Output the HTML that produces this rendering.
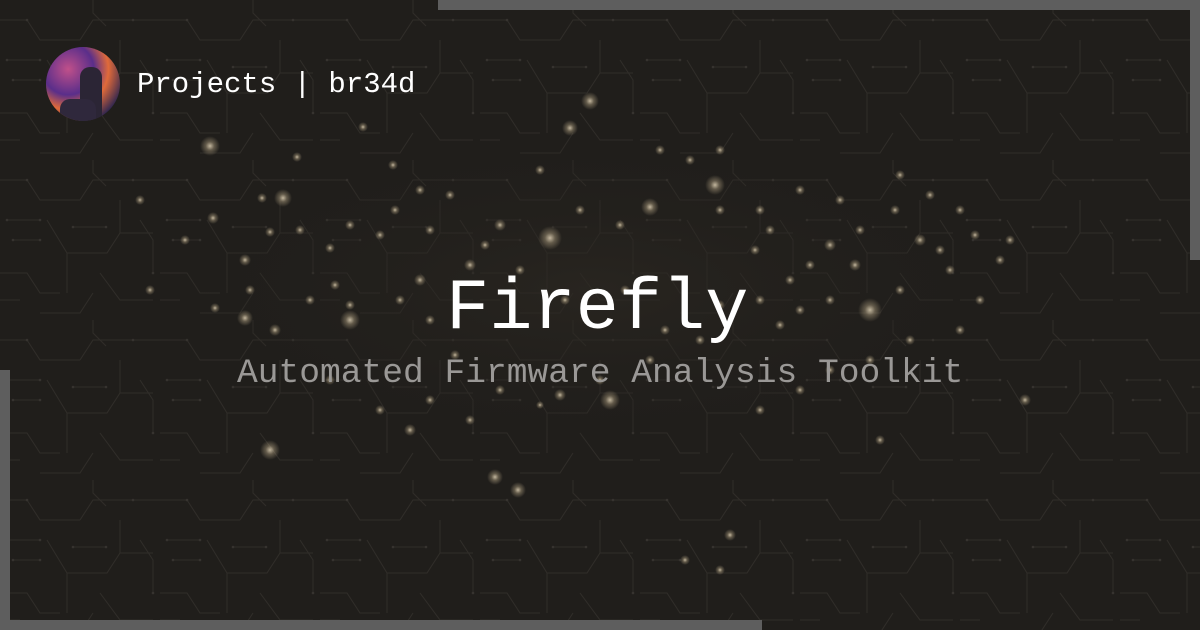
<!DOCTYPE html>
<html><head><meta charset="utf-8"><style>
html,body{margin:0;padding:0}
body{width:1200px;height:630px;overflow:hidden;background:#201e1b;position:relative;font-family:"Liberation Mono","DejaVu Sans Mono",monospace}
.bar{position:absolute;background:#5e5e5e}
.t{position:absolute;white-space:nowrap}
.s{position:absolute;border-radius:50%;background:radial-gradient(circle,rgba(235,220,190,.8) 0,rgba(220,200,160,.35) 30%,rgba(200,180,140,0) 70%)}
</style></head><body>
<svg width="1200" height="630" style="position:absolute;left:0;top:0">
<defs><pattern id="p" width="160" height="160" patternUnits="userSpaceOnUse">
<g stroke="#302d29" stroke-width="1" fill="none">
<path d="M0 20h27l13 20h40M80 40l13-20h40M133 20h27M7 60h33M47 60l20 33v40M67 93h40l13-20h33M0 113h27l13 20h20M93 0v13l13 13M120 40v33M13 80h27M100 113l20 27h33M40 153h40l13-20M0 140h20M140 60l13 20v33M73 67h33"/>
</g>
<g fill="#36332f"><circle cx="27" cy="20" r="1.3"/><circle cx="133" cy="20" r="1.3"/><circle cx="7" cy="60" r="1.3"/><circle cx="40" cy="60" r="1.3"/><circle cx="13" cy="80" r="1.3"/><circle cx="40" cy="80" r="1.3"/><circle cx="153" cy="113" r="1.3"/><circle cx="73" cy="67" r="1.3"/><circle cx="106" cy="67" r="1.3"/></g>
</pattern>
<radialGradient id="cloud" cx="50%" cy="50%" r="50%"><stop offset="0" stop-color="#2c2822" stop-opacity=".7"/><stop offset="1" stop-color="#201e1b" stop-opacity="0"/></radialGradient>
</defs>
<rect width="1200" height="630" fill="url(#p)"/>
<ellipse cx="590" cy="290" rx="460" ry="170" fill="url(#cloud)"/>
</svg>
<div id="stars"></div>
<div class="bar" style="left:438px;top:0;width:762px;height:10px"></div>
<div class="bar" style="left:1190px;top:0;width:10px;height:260px"></div>
<div class="bar" style="left:0;top:620px;width:762px;height:10px"></div>
<div class="bar" style="left:0;top:370px;width:10px;height:260px"></div>
<div style="position:absolute;left:46px;top:47px;width:74px;height:74px;border-radius:50%;overflow:hidden;background:radial-gradient(circle at 30% 30%,#c0508a 0,#5a2e8a 35%,#e06a3a 55%,#2a2450 80%)">
<div style="position:absolute;left:34px;top:20px;width:22px;height:60px;background:#2b2535;border-radius:10px 10px 0 0"></div>
<div style="position:absolute;left:14px;top:52px;width:36px;height:30px;background:#2f283c;border-radius:10px"></div>
</div>
<div class="t" style="left:137px;top:67px;font-size:29px;color:#fff;line-height:36px">Projects | br34d</div>
<div class="t" style="left:446px;top:268px;font-size:72px;color:#fff;line-height:82px">Firefly</div>
<div class="t" style="left:237px;top:353px;font-size:34.6px;color:#9a9896;line-height:42px">Automated Firmware Analysis Toolkit</div>
<script>
var pts=[[210,146,10],[590,101,9],[570,128,8],[363,127,5],[297,157,5],[393,165,5],[420,190,5],[450,195,5],[395,210,5],[715,185,10],[650,207,9],[580,210,5],[620,225,5],[550,238,12],[500,225,6],[485,245,5],[470,265,6],[430,230,5],[380,235,5],[350,225,5],[330,248,5],[300,230,5],[270,232,5],[245,260,6],[213,218,6],[185,240,5],[140,200,5],[150,290,5],[262,198,5],[283,198,9],[215,308,5],[245,318,8],[275,330,6],[310,300,5],[350,305,5],[350,320,10],[400,300,5],[420,280,6],[430,320,5],[720,210,5],[760,210,5],[800,190,5],[840,200,5],[860,230,5],[830,245,6],[810,265,5],[790,280,5],[760,300,5],[800,310,5],[830,300,5],[870,310,12],[900,290,5],[920,240,6],[940,250,5],[960,210,5],[930,195,5],[900,175,5],[950,270,5],[980,300,5],[1000,260,5],[960,330,5],[910,340,5],[870,360,5],[830,370,5],[800,390,5],[760,410,5],[700,340,5],[650,360,5],[600,380,5],[610,400,10],[560,395,6],[500,390,5],[470,420,5],[430,400,5],[410,430,6],[380,410,5],[330,380,5],[270,450,10],[495,477,8],[518,490,8],[730,535,6],[720,570,5],[685,560,5],[1025,400,6],[540,405,4],[660,150,5],[720,150,5],[770,230,5],[625,290,5],[565,300,5],[455,355,5],[665,330,5],[880,440,5],[520,270,5],[540,170,5],[690,160,5],[755,250,5],[335,285,5],[250,290,5],[975,235,5],[1010,240,5],[895,210,5],[855,265,6],[780,325,5],[720,305,5]];
var h='';pts.forEach(function(p){var r=p[2]*2;h+='<div class="s" style="left:'+(p[0]-r/2)+'px;top:'+(p[1]-r/2)+'px;width:'+r+'px;height:'+r+'px"></div>';});
document.getElementById('stars').innerHTML=h;
</script>
</body></html>
